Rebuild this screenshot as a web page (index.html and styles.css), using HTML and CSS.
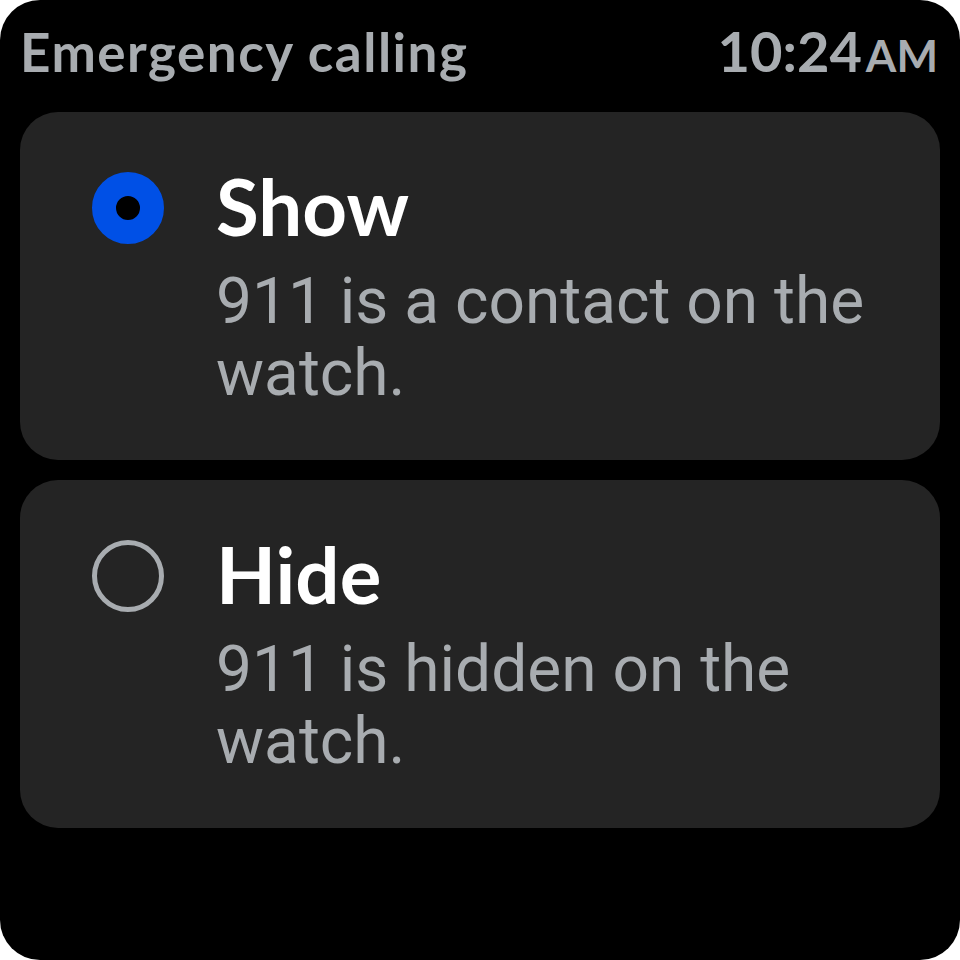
FILE: index.html
```html
<!DOCTYPE html>
<html>
<head>
    <title>Emergency calling</title>
    <link rel="stylesheet" href="styles.css">
</head>
<body>
    <div class="screen">
        <div class="header">
            <span class="header-title">Emergency calling</span>
            <span class="clock">10:24<span class="clock-ampm">AM</span></span>
        </div>

        <div class="option">
            <div class="radio radio-on"></div>
            <div class="option-text">
                <div class="option-title">Show</div>
                <div class="option-desc">911 is a contact on the watch.</div>
            </div>
        </div>

        <div class="option">
            <div class="radio"></div>
            <div class="option-text">
                <div class="option-title">Hide</div>
                <div class="option-desc">911 is hidden on the watch.</div>
            </div>
        </div>
    </div>
</body>
</html>
```

FILE: styles.css
```css
body {
    margin: 0;
    background-color: #fff;
}

.screen {
    width: 960px;
    height: 960px;
    background-color: #000;
    border-radius: 40px;
    overflow: hidden;
    box-sizing: border-box;
    padding: 0 20px;
}

.header {
    height: 112px;
    box-sizing: border-box;
    padding: 21px 2px 0 0;
    display: flex;
    justify-content: space-between;
    align-items: baseline;
    font-family: "Lato", "Noto Sans", sans-serif;
    color: #a8acb0;
    line-height: 60px;
}

.header-title {
    font-size: 53px;
    font-weight: 700;
    letter-spacing: 1.5px;
}

.clock {
    font-size: 56px;
    font-weight: 700;
}

.clock-ampm {
    font-size: 44px;
    margin-left: 4px;
}

.option {
    display: flex;
    background-color: #242424;
    border-radius: 38px;
    height: 348px;
    box-sizing: border-box;
    padding: 50px 40px 0 72px;
    margin-bottom: 20px;
}

.radio {
    flex: none;
    width: 72px;
    height: 72px;
    margin-top: 10px;
    margin-right: 52px;
    box-sizing: border-box;
    border-radius: 50%;
    border: 5px solid #a8acb0;
}

.radio-on {
    border: 24px solid #0050e6;
    background-color: #000;
}

.option-title {
    font-family: "Lato", "Noto Sans", sans-serif;
    font-size: 78px;
    font-weight: 700;
    line-height: 88px;
    color: #fff;
}

.option-desc {
    margin-top: 16px;
    font-family: "Roboto", sans-serif;
    font-size: 64px;
    line-height: 72px;
    color: #a8acb0;
}
```
